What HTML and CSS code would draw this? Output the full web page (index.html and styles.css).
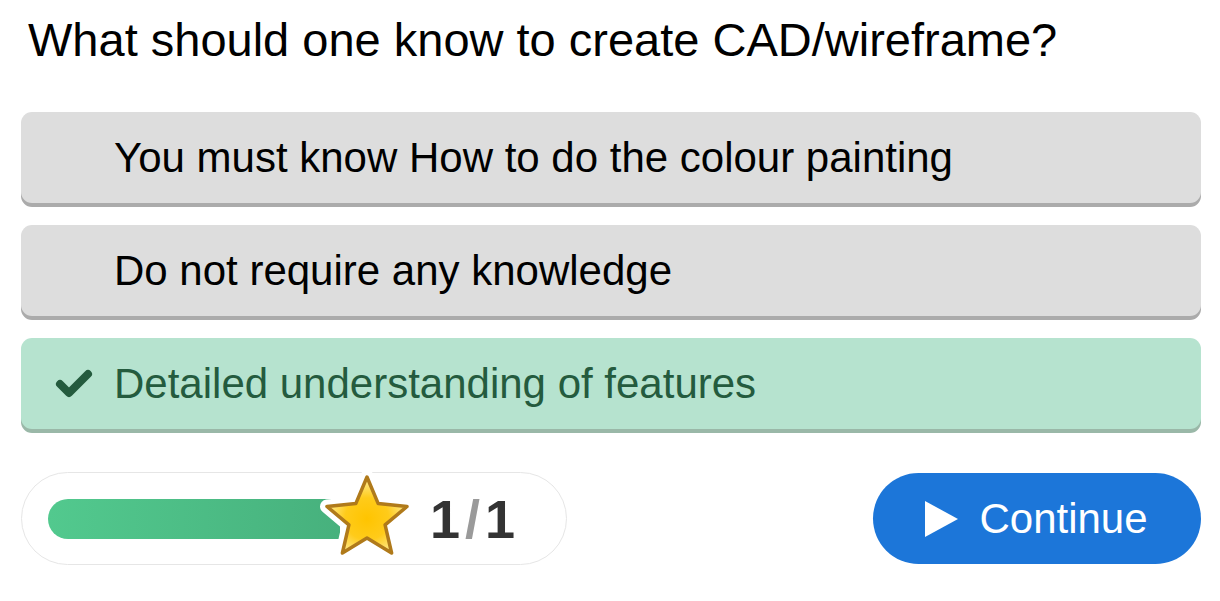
FILE: index.html
```html
<!DOCTYPE html>
<html>
<head>
<meta charset="utf-8">
<link rel="stylesheet" href="styles.css">
</head>
<body>
<div class="quiz">
  <h1 class="question">What should one know to create CAD/wireframe?</h1>
  <div class="options">
    <div class="option"><span class="mark"></span><span class="label">You must know How to do the colour painting</span></div>
    <div class="option"><span class="mark"></span><span class="label">Do not require any knowledge</span></div>
    <div class="option correct"><span class="mark"><svg width="38" height="30" viewBox="0 0 38 30"><path d="M5 15 L14 24 L33 5" fill="none" stroke="#245b3e" stroke-width="8" stroke-linecap="round" stroke-linejoin="round"/></svg></span><span class="label">Detailed understanding of features</span></div>
  </div>
  <div class="footer">
    <div class="progress">
      <div class="track">
        <div class="bar"></div>
        <svg class="star" width="100" height="100" viewBox="0 0 100 100">
          <defs>
            <radialGradient id="sg" cx="50%" cy="55%" r="50%">
              <stop offset="0" stop-color="#ffc400"/>
              <stop offset="0.55" stop-color="#ffcb1a"/>
              <stop offset="1" stop-color="#ffe98a"/>
            </radialGradient>
          </defs>
          <path d="M50 10 L61.2 36.6 L90 39.5 L68.1 57.9 L74.6 86 L50 71 L25.4 86 L31.9 57.9 L10 39.5 L38.8 36.6 Z" fill="none" stroke="#fff" stroke-width="14" stroke-linejoin="round"/>
          <path d="M50 10 L61.2 36.6 L90 39.5 L68.1 57.9 L74.6 86 L50 71 L25.4 86 L31.9 57.9 L10 39.5 L38.8 36.6 Z" fill="url(#sg)" stroke="#b07a1a" stroke-width="3.5" stroke-linejoin="round"/>
        </svg>
      </div>
      <div class="score"><span>1</span><span class="slash">/</span><span>1</span></div>
    </div>
    <button class="continue"><svg width="35" height="38" viewBox="0 0 35 38"><path d="M1 1 L34 19 L1 37 Z" fill="#fff"/></svg><span>Continue</span></button>
  </div>
</div>
</body>
</html>
```
FILE: styles.css
```css
html, body {
  margin: 0;
  padding: 0;
  background: #fff;
}
body {
  font-family: "Liberation Sans", Arial, sans-serif;
}
.quiz {
  padding: 0 19px 0 21px;
  display: flex;
  flex-direction: column;
}
.question {
  margin: 0;
  padding: 12px 0 0 7px;
  font-size: 47px;
  font-weight: normal;
  line-height: 56px;
  color: #000;
  height: 112px;
  box-sizing: border-box;
}
.options {
  display: flex;
  flex-direction: column;
  gap: 22px;
}
.option {
  height: 91px;
  background: #dddddd;
  border-radius: 11px;
  box-shadow: 0 4px 0 #ababab;
  display: flex;
  align-items: center;
  font-size: 42px;
  color: #000;
}
.mark {
  width: 93px;
  display: flex;
  justify-content: center;
  padding-left: 12px;
  box-sizing: border-box;
}
.option.correct {
  background: #b6e3cf;
  color: #245b3e;
  box-shadow: 0 4px 0 #9ab8a8;
}
.footer {
  margin-top: 43px;
  display: flex;
  justify-content: space-between;
  align-items: center;
}
.progress {
  width: 546px;
  height: 93px;
  box-sizing: border-box;
  border: 1px solid #e6e6e6;
  border-radius: 47px;
  display: flex;
  align-items: center;
  padding-left: 26px;
}
.track {
  position: relative;
  width: 292px;
  height: 40px;
}
.bar {
  width: 292px;
  height: 40px;
  border-radius: 20px 0 0 20px;
  background: linear-gradient(90deg, #52c98e, #47b17d);
}
.star {
  position: absolute;
  left: 269px;
  top: -32px;
}
.score {
  margin-left: 90px;
  font-size: 54px;
  font-weight: bold;
  color: #333;
}
.slash {
  color: #9a9a9a;
  margin: 0 5px;
}
.continue {
  width: 328px;
  height: 91px;
  border: none;
  border-radius: 46px;
  background: #1c76d9;
  color: #fff;
  font-family: "Liberation Sans", Arial, sans-serif;
  font-size: 42px;
  display: flex;
  align-items: center;
  justify-content: center;
  gap: 20px;
  padding: 0 2px 0 0;
}
```
